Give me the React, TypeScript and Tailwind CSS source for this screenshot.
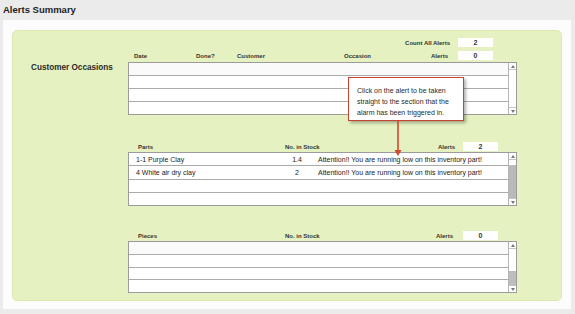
import React from "react"

const partRows = [
  { name: "1-1 Purple Clay", stock: "1.4", msg: "Attention!! You are running low on this inventory part!" },
  { name: "4 White air dry clay", stock: "2", msg: "Attention!! You are running low on this inventory part!" },
  { name: "", stock: "", msg: "" },
  { name: "", stock: "", msg: "" },
]

function ValueBox({ value }: { value: string }) {
  return (
    <div className="w-[35px] h-[9px] bg-white flex items-center justify-center text-[7px] leading-none text-[#333]">
      {value}
    </div>
  )
}

function Arrow({ up }: { up?: boolean }) {
  return (
    <div className={`h-[7px] flex items-center justify-center bg-white ${up ? "border-b" : "border-t"} border-[#c4c4c4]`}>
      <svg width="4" height="3" viewBox="0 0 4 3">
        {up ? <path d="M0 3 L2 0 L4 3 Z" fill="#777" /> : <path d="M0 0 L2 3 L4 0 Z" fill="#777" />}
      </svg>
    </div>
  )
}

function Scrollbar({ kind }: { kind: "empty" | "parts" | "pieces" }) {
  return (
    <div className="w-[8px] flex flex-col border-l border-[#b5b5b5] bg-white">
      <Arrow up />
      {kind === "empty" && <div className="flex-1 bg-white" />}
      {kind === "parts" && (
        <div className="flex-1 flex flex-col">
          <div className="h-[6px] bg-white border-b border-[#bdbdbd]" />
          <div className="flex-1 bg-[#b9b9b9]" />
        </div>
      )}
      {kind === "pieces" && (
        <div className="flex-1 flex flex-col">
          <div className="flex-1 bg-white" />
          <div className="h-[14px] bg-[#bdbdbd]" />
        </div>
      )}
      <Arrow />
    </div>
  )
}

function Table({ height, kind, children }: { height: string; kind: "empty" | "parts" | "pieces"; children: React.ReactNode }) {
  return (
    <div className={`flex w-[389px] ${height} border border-[#9b9b9b] bg-white`}>
      <div className="flex-1 flex flex-col">{children}</div>
      <Scrollbar kind={kind} />
    </div>
  )
}

function EmptyRows() {
  return (
    <>
      {[0, 1, 2, 3].map((i) => (
        <div key={i} className={`flex-1 ${i < 3 ? "border-b border-[#ababab]" : ""} ${i === 0 ? "bg-[#fafafa]" : "bg-white"}`} />
      ))}
    </>
  )
}

export default function App() {
  return (
    <div className="w-[575px] h-[314px] bg-[#ebebeb] font-['Liberation_Sans',Arial,sans-serif] text-[#222] overflow-hidden">
      <div className="h-[20px] pl-[3px] pt-[5px] text-[9.5px] leading-[10px] font-bold text-[#1e1e1e]">Alerts Summary</div>

      <div className="ml-[3px] w-[568px] h-[289px] bg-[#fcfcfc] pt-[10px] px-[9px]">
        <div className="relative w-[550px] h-[271px] rounded-[5px] bg-[#e5f1c0] border border-[#dbe8b2]">
          <div className="flex">
            {/* left label column */}
            <div className="w-[115px] shrink-0 pt-[32px] pl-[18px]">
              <div className="text-[8.2px] leading-[10px] font-bold text-[#2a2a2a] whitespace-nowrap">Customer Occasions</div>
            </div>

            <div className="flex flex-col text-[6px] font-bold text-[#333] leading-none">
              {/* count all alerts */}
              <div className="mt-[7px] h-[9px] flex items-center">
                <div className="w-[330px] text-right pr-[8px] whitespace-nowrap">Count All Alerts</div>
                <ValueBox value="2" />
              </div>

              {/* customer occasions header */}
              <div className="mt-[4px] h-[9px] flex items-center">
                <div className="w-[6px]" />
                <div className="w-[62px]">Date</div>
                <div className="w-[41px]">Done?</div>
                <div className="w-[107px]">Customer</div>
                <div className="w-[60px]">Occasion</div>
                <div className="w-[54px] text-right pr-[10px]">Alerts</div>
                <ValueBox value="0" />
              </div>

              <div className="mt-[2px]">
                <Table height="h-[53px]" kind="empty">
                  <EmptyRows />
                </Table>
              </div>

              {/* parts header */}
              <div className="mt-[27px] h-[9px] flex items-center">
                <div className="w-[10px]" />
                <div className="w-[147px]">Parts</div>
                <div className="w-[151px]">No. in Stock</div>
                <div className="w-[27px] text-right pr-[8px]">Alerts</div>
                <ValueBox value="2" />
              </div>

              <div className="mt-[1px] font-normal">
                <Table height="h-[54px]" kind="parts">
                  {partRows.map((r, i) => (
                    <div
                      key={i}
                      className={`flex-1 flex items-center text-[7px] text-[#1a1a1a] whitespace-nowrap ${i < 3 ? "border-b border-[#ababab]" : ""}`}
                    >
                      <div className="w-[156px] pl-[7px]">{r.name}</div>
                      <div className="w-[24px] text-center">{r.stock}</div>
                      <div className="pl-[9px]">{r.msg}</div>
                    </div>
                  ))}
                </Table>
              </div>

              {/* pieces header */}
              <div className="mt-[25px] h-[9px] flex items-center">
                <div className="w-[10px]" />
                <div className="w-[147px]">Pieces</div>
                <div className="w-[151px]">No. in Stock</div>
                <div className="w-[27px] text-right pr-[10px]">Alerts</div>
                <ValueBox value="0" />
              </div>

              <div className="mt-[1px]">
                <Table height="h-[52px]" kind="pieces">
                  <EmptyRows />
                </Table>
              </div>
            </div>
          </div>

          {/* callout */}
          <div className="absolute left-[335px] top-[46px] w-[116px] h-[44px] bg-white border-[1.5px] border-[#c9442f] shadow-[2px_2px_3px_rgba(0,0,0,0.3)] pl-[8px] pt-[7px] text-[7px] leading-[11px] text-[#2a2a2a] whitespace-nowrap">
            <div>Click on the alert to be taken</div>
            <div>straight to the section that the</div>
            <div>alarm has been triggered in.</div>
          </div>
          <svg className="absolute left-[381px] top-[90px]" width="8" height="36" viewBox="0 0 8 36">
            <line x1="4" y1="0" x2="4" y2="31" stroke="#d4472d" strokeWidth="1.6" />
            <path d="M0.5 29 L4 35 L7.5 29 Z" fill="#d4472d" />
          </svg>
        </div>
      </div>
    </div>
  )
}
